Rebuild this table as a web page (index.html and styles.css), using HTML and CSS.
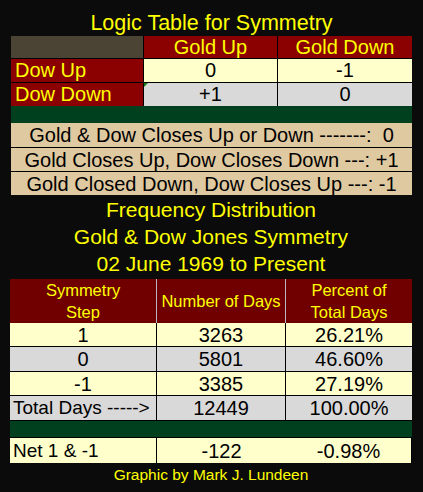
FILE: index.html
```html
<!DOCTYPE html>
<html>
<head>
<meta charset="utf-8">
<link rel="stylesheet" href="styles.css">
</head>
<body>
<div class="page">
  <div class="title">Logic Table for Symmetry</div>
  <div class="logic">
    <div class="c corner"></div>
    <div class="c hd">Gold Up</div>
    <div class="c hd">Gold Down</div>
    <div class="c lab">Dow Up</div>
    <div class="c yel">0</div>
    <div class="c yel">-1</div>
    <div class="c lab">Dow Down</div>
    <div class="c gry flag">+1</div>
    <div class="c gry">0</div>
  </div>
  <div class="band"></div>
  <div class="notes">
    <div class="note">Gold &amp; Dow Closes Up or Down -------:&nbsp; 0</div>
    <div class="note">Gold Closes Up, Dow Closes Down ---: +1</div>
    <div class="note">Gold Closed Down, Dow Closes Up ---: -1</div>
  </div>
  <div class="subtitles">
    <div class="sub">Frequency Distribution</div>
    <div class="sub">Gold &amp; Dow Jones Symmetry</div>
    <div class="sub">02 June 1969 to Present</div>
  </div>
  <div class="freq">
    <div class="f fh">Symmetry<br>Step</div>
    <div class="f fh">Number of Days</div>
    <div class="f fh">Percent of<br>Total Days</div>

    <div class="f yel">1</div>
    <div class="f yel">3263</div>
    <div class="f yel">26.21%</div>

    <div class="f gry">0</div>
    <div class="f gry">5801</div>
    <div class="f gry">46.60%</div>

    <div class="f yel">-1</div>
    <div class="f yel">3385</div>
    <div class="f yel">27.19%</div>

    <div class="f gry left">Total Days -----&gt;</div>
    <div class="f gry">12449</div>
    <div class="f gry">100.00%</div>

    <div class="fband"></div>

    <div class="f yel left">Net 1 &amp; -1</div>
    <div class="f yel">-122</div>
    <div class="f yel">-0.98%</div>
  </div>
  <div class="footer">Graphic by Mark J. Lundeen</div>
</div>
</body>
</html>
```

FILE: styles.css
```css
html, body {
  margin: 0;
  padding: 0;
  background: #0b0b0b;
}
body {
  width: 423px;
  height: 492px;
  overflow: hidden;
  font-family: "Liberation Sans", Arial, sans-serif;
}
.page {
  padding: 8px 11px 0 10px;
  display: flex;
  flex-direction: column;
}
.title {
  height: 28px;
  line-height: 30px;
  text-align: center;
  color: #ffff00;
  font-size: 21.5px;
  padding-left: 1px;
}
.logic {
  margin-left: 1px;
  display: grid;
  grid-template-columns: 133px 134px 134px;
  grid-template-rows: 23px 24px 23px;
  background: #000;
}
.c {
  font-size: 20px;
  line-height: 23px;
  text-align: center;
  box-sizing: border-box;
  border-right: 1px solid #000;
  border-bottom: 1px solid #000;
  position: relative;
}
.c:nth-child(3n) { border-right: none; }
.corner { background: #4b4434; }
.hd { background: #8b0000; color: #ffff00; }
.lab { background: #8b0000; color: #ffff00; text-align: left; padding-left: 4px; }
.yel { background: #ffffcc; color: #000; }
.gry { background: #d9d9d9; color: #000; }
.logic .c:nth-child(n+7) { border-bottom: none; }
.flag::before {
  content: "";
  position: absolute;
  left: 0;
  top: 0;
  border-top: 4px solid #1a7a1a;
  border-right: 4px solid transparent;
}
.band {
  margin-left: 1px;
  height: 17px;
  background: #00401f;
}
.notes {
  margin-left: 1px;
  display: flex;
  flex-direction: column;
  gap: 1px;
  background: #000;
}
.note {
  height: 23px;
  line-height: 24px;
  background: #dfc9a1;
  color: #000;
  text-align: center;
  font-size: 20px;
}
.notes .note:first-child { height: 24px; }
.subtitles {
  height: 84px;
  display: flex;
  flex-direction: column;
  justify-content: center;
  padding-bottom: 1px;
  box-sizing: border-box;
}
.sub {
  color: #ffff00;
  font-size: 21px;
  line-height: 27px;
  text-align: center;
}
.freq {
  display: grid;
  grid-template-columns: 147px 129px 126px;
  grid-template-rows: 44px 24px 25px 24px 25px 17px 25px;
  background: #000;
}
.f {
  font-size: 20px;
  line-height: 24px;
  text-align: center;
  box-sizing: border-box;
  border-right: 1px solid #000;
  border-bottom: 1px solid #000;
  display: flex;
  align-items: center;
  justify-content: center;
  white-space: nowrap;
}
.f:nth-child(3n) { border-right: none; }
.fh {
  background: #700000;
  color: #ffff00;
  font-size: 16.5px;
  line-height: 22px;
  border-right-color: #b8b8b8;
  border-bottom: none;
  white-space: normal;
}
.f.left {
  justify-content: flex-start;
  padding-left: 3px;
  font-size: 19px;
}
.fband {
  grid-column: 1 / 4;
  background: #00401f;
  border-bottom: 1px solid #000;
}
.freq .f:nth-last-child(-n+3) { border-bottom: none; }
.freq .fband ~ .f:nth-child(3n+2) { border-right: 1px solid #000; }
.footer {
  text-align: center;
  color: #ffff00;
  font-size: 15.5px;
  line-height: 24px;
}
```
